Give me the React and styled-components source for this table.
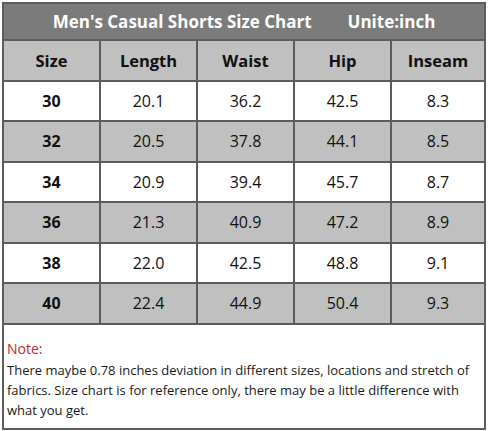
import React from 'react';
import styled, { createGlobalStyle } from 'styled-components';

const GlobalStyle = createGlobalStyle`
    body {
        margin: 0;
        background: #ffffff;
        font-family: 'Open Sans', 'Noto Sans', sans-serif;
    }
`;

const Page = styled.div`
    width: 488px;
    height: 431px;
    padding: 2px 2px 0 2px;
    box-sizing: border-box;
`;

const Chart = styled.section`
    width: 484px;
    border: 2px solid #5c5c5c;
    box-sizing: border-box;
    background: #ffffff;
`;

const Title = styled.h2`
    margin: 0;
    height: 35px;
    border-bottom: 2px solid #5c5c5c;
    background-color: #7b7b7b;
    color: #ffffff;
    font-size: 17px;
    font-weight: 700;
    display: flex;
    align-items: center;
    justify-content: center;
    gap: 36px;
`;

const Grid = styled.div`
    display: grid;
    grid-template-columns: 97px 97px 97px 97px 92px;
`;

const Cell = styled.div`
    height: 38.5px;
    display: flex;
    align-items: center;
    justify-content: center;
    border-bottom: 2px solid #5c5c5c;
    border-right: ${p => (p.$last ? 'none' : '2px solid #5c5c5c')};
    background-color: ${p => (p.$shaded ? '#c0c0c0' : '#ffffff')};
    color: #111111;
    font-size: ${p => (p.$head ? '16.5px' : '16px')};
    font-weight: ${p => (p.$bold ? 700 : 400)};
`;

const Note = styled.div`
    padding: 13px 4px 8px 3px;
    font-size: 13px;
    line-height: 20px;
    color: #1a1a1a;
`;

const NoteLabel = styled.div`
    color: #c1272d;
    font-size: 14px;
    line-height: 22px;
`;

const columns = ['Size', 'Length', 'Waist', 'Hip', 'Inseam'];

const rows = [
    ['30', '20.1', '36.2', '42.5', '8.3'],
    ['32', '20.5', '37.8', '44.1', '8.5'],
    ['34', '20.9', '39.4', '45.7', '8.7'],
    ['36', '21.3', '40.9', '47.2', '8.9'],
    ['38', '22.0', '42.5', '48.8', '9.1'],
    ['40', '22.4', '44.9', '50.4', '9.3'],
];

function App() {
    return (
        <Page>
            <GlobalStyle />
            <Chart>
                <Title>
                    <span>Men's Casual Shorts Size Chart</span>
                    <span>Unite:inch</span>
                </Title>
                <Grid>
                    {columns.map((c, i) => (
                        <Cell key={c} $shaded $bold $head $last={i === 4}>{c}</Cell>
                    ))}
                    {rows.map((row, r) =>
                        row.map((v, i) => (
                            <Cell
                                key={r + '-' + i}
                                $shaded={r % 2 === 1}
                                $bold={i === 0}
                                $last={i === 4}
                            >
                                {v}
                            </Cell>
                        ))
                    )}
                </Grid>
                <Note>
                    <NoteLabel>Note:</NoteLabel>
                    There maybe 0.78 inches deviation in different sizes, locations and stretch of fabrics. Size chart is for reference only, there may be a little difference with what you get.
                </Note>
            </Chart>
        </Page>
    );
}

export default App;
